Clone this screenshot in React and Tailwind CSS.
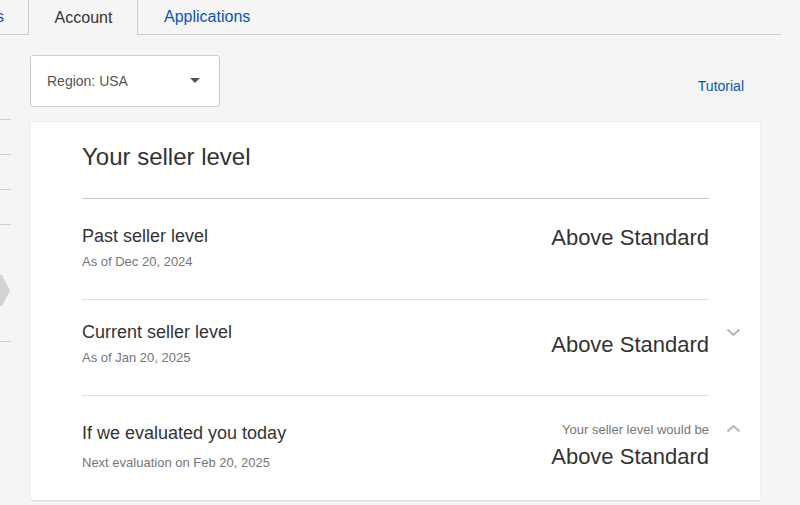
import React from "react";

const font = { fontFamily: '"Liberation Sans", Arial, sans-serif' };

function ChevronDown() {
  return (
    <svg width="15" height="9" viewBox="0 0 15 9" className="block">
      <polyline points="1.5,1.5 7.5,7 13.5,1.5" fill="none" stroke="#b3b3b3" strokeWidth="2" />
    </svg>
  );
}

function ChevronUp() {
  return (
    <svg width="15" height="9" viewBox="0 0 15 9" className="block">
      <polyline points="1.5,7.5 7.5,2 13.5,7.5" fill="none" stroke="#b3b3b3" strokeWidth="2" />
    </svg>
  );
}

function SideNav() {
  return (
    <div className="w-[11px] flex flex-col pt-[50px]">
      <div className="h-[35px] border-b border-[#cfcfcf]" />
      <div className="h-[35px] border-b border-[#cfcfcf]" />
      <div className="h-[35px] border-b border-[#cfcfcf]" />
      <div className="h-[35px] border-b border-[#cfcfcf]" />
      <div className="h-[117px] border-b border-[#cfcfcf] flex items-center pt-[14px]">
        <svg width="10" height="31" viewBox="0 0 10 31" className="block">
          <polygon points="0,0 2,0 10,15.5 2,31 0,31" fill="#d2d2d2" />
        </svg>
      </div>
    </div>
  );
}

export default function App() {
  return (
    <div className="w-[800px] h-[505px] overflow-hidden bg-[#f5f5f5] text-[#333]" style={font}>
      {/* tab strip */}
      <div className="flex w-[781px] h-[35px]">
        <div className="w-[29px] h-[35px] border-r border-b border-[#cccccc] overflow-hidden flex justify-end items-center pr-[24px] text-[16px] text-[#0654ba] whitespace-nowrap">
          Listings
        </div>
        <div className="w-[109px] h-[35px] border-r border-[#cccccc] flex items-center justify-center text-[16px] text-[#333] pl-px">
          Account
        </div>
        <div className="flex-1 h-[35px] border-b border-[#cccccc] flex items-center pl-[26px] text-[16px] text-[#0654ba]">
          Applications
        </div>
      </div>

      <div className="flex">
        <SideNav />

        <div className="w-[730px] ml-[19px]">
          {/* region picker + tutorial link */}
          <div className="flex items-end justify-between mt-[20px]">
            <div className="w-[190px] h-[52px] bg-white border border-[#cccccc] rounded-[3px] flex items-center justify-between pl-[16px] pr-[19px]">
              <span className="text-[14px] text-[#555]">Region: USA</span>
              <svg width="10" height="6" viewBox="0 0 10 6" className="block">
                <polygon points="0,0 10,0 5,5" fill="#555" />
              </svg>
            </div>
            <div className="text-[14px] leading-[18px] text-[#0654ba] pb-[12px] pr-[16px]">Tutorial</div>
          </div>

          {/* seller level card */}
          <div className="ml-px mt-[15px] w-[729px] bg-white shadow-[0_0_1px_rgba(0,0,0,0.15)] border-b border-[#dcdcdc] px-[51px]">
            <div className="pt-[21px] pb-[27px] border-b border-[#c8c8c8] text-[24px] leading-[28px] text-[#333]">
              Your seller level
            </div>

            {/* past */}
            <div className="flex items-start justify-between pt-[26px] pb-[29px] border-b border-[#e2e2e2]">
              <div className="flex flex-col">
                <div className="text-[18px] leading-[22px]">Past seller level</div>
                <div className="text-[13px] leading-[16px] text-[#767676] mt-[7px]">As of Dec 20, 2024</div>
              </div>
              <div className="text-[22px] leading-[26px]">Above Standard</div>
            </div>

            {/* current */}
            <div className="relative flex items-center justify-between pt-[21px] pb-[29px] border-b border-[#e2e2e2]">
              <div className="flex flex-col">
                <div className="text-[18px] leading-[22px]">Current seller level</div>
                <div className="text-[13px] leading-[16px] text-[#767676] mt-[7px]">As of Jan 20, 2025</div>
              </div>
              <div className="text-[22px] leading-[26px] pt-[3px]">Above Standard</div>
              <div className="absolute right-[-32px] top-[28px]">
                <ChevronDown />
              </div>
            </div>

            {/* projected */}
            <div className="relative flex items-start justify-between pt-[26px] pb-[29px]">
              <div className="flex flex-col">
                <div className="text-[18px] leading-[22px]">If we evaluated you today</div>
                <div className="text-[13px] leading-[16px] text-[#767676] mt-[11px]">Next evaluation on Feb 20, 2025</div>
              </div>
              <div className="flex flex-col items-end">
                <div className="text-[13px] leading-[16px] text-[#767676]">Your seller level would be</div>
                <div className="text-[22px] leading-[26px] mt-[6px]">Above Standard</div>
              </div>
              <div className="absolute right-[-32px] top-[28px]">
                <ChevronUp />
              </div>
            </div>
          </div>
        </div>
      </div>
    </div>
  );
}
